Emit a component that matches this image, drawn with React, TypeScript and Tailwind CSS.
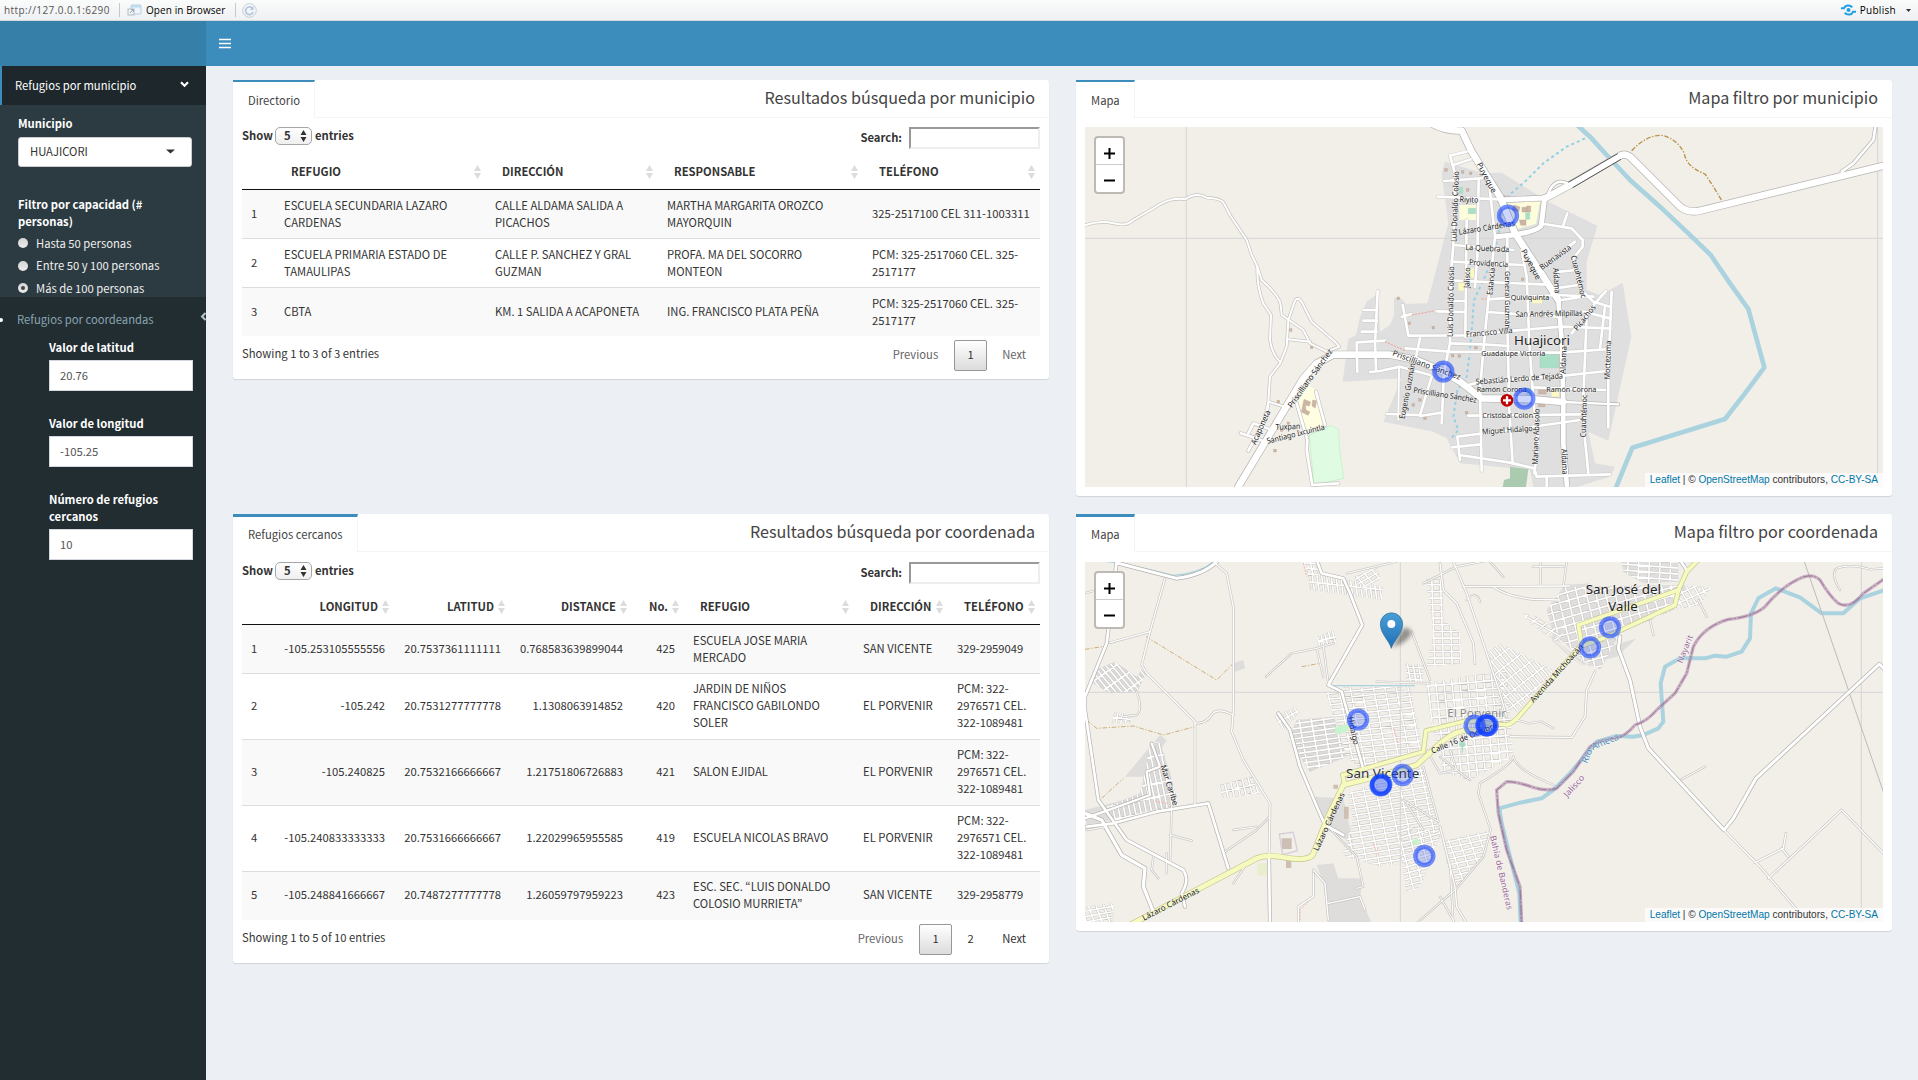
import React from "react";

/* ---------- map primitives ---------- */

type Road = [d: string, w: number];

function Roads({ layers }: { layers: { x?: number; y?: number; casing: string; fill: string; edge?: number; roads: Road[] }[] }) {
  return (
    <g fill="none" strokeLinecap="round" strokeLinejoin="round">
      {layers.map((l, i) => (
        <g key={"c" + i} transform={`translate(${l.x ?? 0} ${l.y ?? 0})`} stroke={l.casing}>
          {l.roads.map(([d, w], j) => (
            <path key={j} d={d} strokeWidth={w + (l.edge ?? 4)} />
          ))}
        </g>
      ))}
      {layers.map((l, i) => (
        <g key={"f" + i} transform={`translate(${l.x ?? 0} ${l.y ?? 0})`} stroke={l.fill}>
          {l.roads.map(([d, w], j) => (
            <path key={j} d={d} strokeWidth={w} />
          ))}
        </g>
      ))}
    </g>
  );
}

type GridSpec = { id: string; pts: string; a: number; sa: number; b: number; sb: number; bg?: string };

/* Street blocks: two families of parallel streets clipped to a district outline. */
function StreetGrid({ id, pts, a, sa, b, sb, bg }: GridSpec) {
  const p = pts.split(" ").map((s) => s.split(",").map(Number));
  const cx = p.reduce((s, v) => s + v[0], 0) / p.length;
  const cy = p.reduce((s, v) => s + v[1], 0) / p.length;
  const R = Math.max(...p.map((v) => Math.hypot(v[0] - cx, v[1] - cy)));
  const lines = (deg: number, step: number) => {
    const t = (deg * Math.PI) / 180;
    const ux = Math.cos(t);
    const uy = Math.sin(t);
    let d = "";
    for (let k = -Math.ceil(R / step); k * step <= R; k++) {
      const ox = cx - uy * k * step;
      const oy = cy + ux * k * step;
      d += `M${(ox - ux * R).toFixed(1)} ${(oy - uy * R).toFixed(1)}L${(ox + ux * R).toFixed(1)} ${(oy + uy * R).toFixed(1)}`;
    }
    return d;
  };
  const d = lines(a, sa) + lines(b, sb);
  return (
    <g>
      <clipPath id={id}>
        <polygon points={pts} />
      </clipPath>
      {bg && <polygon points={pts} fill={bg} />}
      <g clipPath={`url(#${id})`} fill="none">
        <path d={d} stroke="#c6c4c1" strokeWidth="8" />
        <path d={d} stroke="#fff" strokeWidth="4.8" />
      </g>
    </g>
  );
}

type LabelSpec = [text: string, x: number, y: number, rot: number, w: number, size?: number, color?: string];

function Labels({ items }: { items: LabelSpec[] }) {
  return (
    <g fontFamily="'Noto Sans', sans-serif" textAnchor="middle">
      {items.map(([t, x, y, r, w, s = 24, c = "#222"], i) => (
        <text
          key={i}
          transform={`translate(${x} ${y}) rotate(${r})`}
          dy="0.34em"
          fontSize={s}
          fill={c}
          stroke="#fff"
          strokeOpacity="0.5"
          strokeWidth="3"
          paintOrder="stroke"
          textLength={w}
          lengthAdjust="spacingAndGlyphs"
        >
          {t}
        </text>
      ))}
    </g>
  );
}

function Rings({ at }: { at: [number, number, number?][] }) {
  return (
    <g>
      {at.map(([x, y, o = 0.58], i) => (
        <circle key={i} cx={x} cy={y} r="27" fill="#03f" fillOpacity="0.2" stroke="#1040ff" strokeOpacity={o} strokeWidth="13" />
      ))}
    </g>
  );
}

/* ---------- Huajicori ---------- */

const townMain: Road[] = [
  ["M95 40Q130 62 185 62L215 125L240 165L300 260L345 370L430 500L475 570", 20],
  ["M475 570L485 690L490 880L490 1000L502 1140", 14],
  ["M-485 1130L-395 980L-335 880L-290 805L-250 760L-200 734L-30 734L50 750L130 785L180 815L245 865L400 868L490 876", 20],
  ["M490 876L655 883", 7],
  ["M435 265L510 225L655 140Q672 128 690 140L840 290Q865 310 900 302L1460 165", 20],
  ["M300 270L430 264L434 262L424 345Q418 362 345 374L288 380", 15],
  ["M445 250Q465 200 505 222", 8],
  ["M1325 185L1360 160L1420 90L1428 40", 8],
];

const townStreets: Road[] = [
  ["M200 125L150 137L165 190", 8],
  ["M160 165L212 148", 8],
  ["M132 213L240 205L262 200", 8],
  ["M113 260L300 268", 8],
  ["M165 190L160 405L152 500L150 700L132 785L125 940", 8],
  ["M200 330L196 680", 8],
  ["M236 210L232 440L225 530", 8],
  ["M265 200L285 380L262 600L250 720L240 840L245 1082", 8],
  ["M322 380L322 640L328 900L338 1060", 8],
  ["M365 420L380 500L388 700L400 870L415 1000L403 1090", 8],
  ["M160 405L340 420", 8],
  ["M155 455L370 465", 8],
  ["M165 512L440 524", 8],
  ["M155 573L195 573", 8],
  ["M110 604L195 606", 8],
  ["M262 568L470 555L580 560", 8],
  ["M262 606L475 620", 8],
  ["M25 677L195 676L340 662L485 650L630 655", 8],
  ["M150 700L250 703L325 708", 8],
  ["M17 715L150 725L480 728L615 718", 8],
  ["M240 815L380 805L500 796L620 783", 8],
  ["M205 825L245 815", 8],
  ["M400 832L615 840", 8],
  ["M205 917L540 913", 8],
  ["M155 1012L242 1003", 8],
  ["M180 1050L172 980L330 960L540 930", 8],
  ["M178 1035L330 1058L403 1075L410 1100L630 1093", 8],
  ["M440 1105L440 1140", 8],
  ["M432 342L515 355L548 390L548 410L520 445L525 485L545 540L580 575L630 590", 8],
  ["M490 345L502 310", 8],
  ["M430 470L525 395", 8],
  ["M480 485L530 480", 8],
  ["M465 535L535 525", 8],
  ["M485 570L550 560", 8],
  ["M475 480L465 540", 8],
  ["M515 670L585 580L618 543", 8],
  ["M550 605L630 625", 8],
  ["M635 545L625 780L625 952", 8],
  ["M615 590L600 715", 8],
  ["M560 620L550 860L555 990L565 1090", 8],
  ["M8 585L25 677", 8],
  ["M5 620L35 612", 8],
  ["M60 685L48 740", 8],
  ["M-67 543L-75 700L-72 780", 8],
  ["M-110 600L-70 600", 8],
  ["M-110 632L-70 632", 8],
  ["M-115 665L-70 665", 8],
  ["M-45 692L-130 697L-128 785", 8],
  ["M-90 786L-60 783L0 770L90 795", 8],
  ["M95 800L60 915L-40 912", 8],
  ["M125 908L60 918", 8],
  ["M-3 770L-5 930", 6],
];

const ruralWest: Road[] = [
  ["M40 467Q90 450 130 460T190 450L250 415Q300 380 345 388Q380 365 410 383Q455 385 462 400L480 435L530 510L545 555L562 590L575 630Q630 680 632 705L635 735L700 780L720 820L770 845L808 830L795 815L725 755L695 695Q680 675 672 700L655 750L650 830L630 880L600 920L595 995L650 1012", 6],
  ["M562 590Q560 650 580 700L603 735L600 810Q605 850 630 875", 6],
  ["M655 808L720 815", 6],
  ["M595 1000L585 1050L535 1142", 8],
  ["M512 1090L545 1100L585 1115", 8],
  ["M535 1090L550 1060L600 1078", 8],
  ["M680 1000L712 1110L710 1140L727 1245L805 1240", 8],
  ["M738 965L765 1065", 8],
];

const townLabels: LabelSpec[] = [
  ["Puyeque", 260, 203, 62, 100],
  ["Puyeque", 393, 463, 62, 100],
  ["Luis Donaldo Colosio", 165, 290, -88, 212],
  ["Luis Donaldo Colosio", 152, 575, -89, 212],
  ["Riyito", 207, 269, 2, 56],
  ["Lázaro Cárdenas", 260, 353, -9, 170],
  ["La Quebrada", 262, 415, 3, 132],
  ["Providencia", 266, 460, 3, 118],
  ["Buenavista", 466, 442, -36, 110],
  ["Cuauhtémoc", 536, 500, 76, 130],
  ["Aldama", 470, 512, 86, 76],
  ["Jalisco", 201, 503, -88, 62],
  ["Estancia", 273, 514, -84, 82],
  ["General Guzmán", 322, 570, 90, 174],
  ["Quiviquinta", 390, 562, 0, 116],
  ["San Andrés Milpillas", 447, 611, -1, 200],
  ["Picachos", 554, 623, -52, 90],
  ["Francisco Villa", 268, 667, -5, 140],
  ["Guadalupe Victoria", 340, 729, 0, 192],
  ["Aldama", 490, 750, -88, 84],
  ["Aldama", 494, 1055, 88, 76],
  ["Moctezuma", 623, 750, -88, 116],
  ["Sebastián Lerdo de Tejada", 358, 806, -4, 262],
  ["Ramón Corona", 305, 838, 0, 150],
  ["Ramón Corona", 514, 838, 0, 150],
  ["Priscilliano Sánchez", 135, 855, 9, 192],
  ["Cristóbal Colón", 323, 917, 0, 152],
  ["Miguel Hidalgo", 322, 960, -4, 152],
  ["Mariano Abasolo", 408, 980, -88, 168],
  ["Cuauhtémoc", 551, 918, -88, 128],
  ["Priscilliano Sánchez", 80, 765, 20, 215],
  ["Priscilliano Sánchez", -270, 805, -54, 210],
  ["Eugenio Guzmán", 22, 843, -79, 170],
  ["Acaponeta", -418, 952, -66, 110],
  ["Tuxpan", -336, 950, -2, 74],
  ["Santiago Ixcuintla", -313, 972, -14, 178],
  ["Huajicori", 426, 692, 0, 168, 39],
];

const townBuildings: [number, number][] = [
  [138, 180], [160, 172], [188, 186], [212, 190], [203, 240], [312, 260], [28, 640], [100, 653], [228, 713], [158, 737], [178, 738],
  [60, 870], [40, 885], [75, 925], [200, 908], [-5, 565], [-328, 660], [-265, 712], [-365, 875], [-375, 1022], [-335, 940], [-355, 960], [368, 508],
];

function TownMap() {
  return (
    <svg width="798" height="360" viewBox="0 0 798 360" className="block">
      <rect width="798" height="360" fill="#f2efe9" />
      <g transform="translate(315 -17) scale(0.333333)">
        <polygon
          fill="#dfdfdf"
          points="135,155 250,190 305,188 445,275 592,347 560,455 560,540 600,555 668,518 694,680 625,993 565,965 585,1060 645,1070 630,1100 530,1131 400,1131 390,1080 180,1060 140,985 100,965 -50,935 5,805 -172,815 -155,688 -132,675 -120,620 -100,575 -65,550 -60,665 -30,645 -18,615 -18,565 0,563 20,582 82,580 145,340 125,190"
        />
        <path d="M-641 50V1140M1433 50V1140M-950 385H1450" stroke="#d5d5d8" strokeWidth="3" />
        <polygon points="178,285 230,285 230,330 178,330" fill="#fdfcdb" />
        <polygon points="318,272 422,268 408,342 352,356 335,320" fill="#fdfcdb" />
        <polygon points="-310,880 -278,820 -255,840 -225,945 -282,965" fill="#fffee0" />
        <path d="M208 475h14v28h-14zM175 516h22v26h-22zM396 562h30v18h-30zM455 842h22v18h-22z" fill="#fbf8c0" />
        <path d="M205 295h22v16h-22zM178 232h10v18h-10zM377 308h12v20h-12zM420 732h56v41h-56zM380 835h22v18h-22z" fill="#a9dfc7" stroke="#8fcfb2" />
        <polygon points="-272,975 -208,946 -185,958 -180,1030 -169,1105 -258,1125" fill="#dffce2" stroke="#b8f2bd" strokeWidth="2" />
        <polygon points="330,1070 385,1078 378,1131 308,1131 312,1110 330,1105" fill="#aacbaf" />
        <path d="M520 35L570 80L620 135L690 210L780 290L865 370L932 435L990 520L1045 597L1093 772L1035 850L975 927L697 1013L645 1140" fill="none" stroke="#aad3df" strokeWidth="14" strokeLinejoin="round" />
        <g fill="none" stroke="#93d0e4" strokeWidth="6" strokeDasharray="9 9">
          <path d="M555 85L500 110L430 160L380 210L325 258L300 350L285 420L255 500L222 570L216 650L210 720L200 800L172 840L160 920L175 960L150 990" />
        </g>
        <g fill="#cbb5a5" stroke="#b9a291">
          {townBuildings.map(([x, y], i) => (
            <rect key={i} x={x - 4} y={y - 4} width="8" height="8" />
          ))}
          <path d="M342 285l18 6-4 14-20-6zM366 292h14v14h-14zM380 288h12v18h-12zM358 330l20 0 0 16-16 0z" />
          <path d="M-288 868l20 8-4 12-12-2 2 14 12 6-6 10-20-10zM-262 870l12 2-4 22-10-6zM415 838h24v14h-24zM415 878h20v12h-20z" />
        </g>
        <Roads
          layers={[
            { casing: "#c9c7c4", fill: "#fff", edge: 3, roads: townStreets },
            { x: -990, y: -120, casing: "#c4c2bf", fill: "#fff", edge: 4, roads: ruralWest },
            { casing: "#b4b3b1", fill: "#fff", edge: 4, roads: townMain },
          ]}
        />
        <path d="M505 217L653 131M518 233L663 148" stroke="#555" strokeWidth="3" />
        <path d="M695 122Q740 75 785 76Q830 85 853 130Q858 170 915 192Q935 220 966 273" fill="none" stroke="#b8924a" strokeWidth="4" strokeDasharray="14 5 4 5" />
        <path d="M35 615L100 603M-45 695L15 722M245 567h20" fill="none" stroke="#f59a8c" strokeWidth="3" strokeDasharray="6 4" />
        <Labels items={townLabels} />
        <circle cx="321" cy="871" r="19" fill="#bf0000" />
        <path d="M321 859v24M309 871h24" stroke="#fff" strokeWidth="7" />
        <Rings at={[[324, 317], [130, 785], [373, 866]]} />
      </g>
    </svg>
  );
}

/* ---------- San Vicente ---------- */

const valleyGrids: GridSpec[] = [
  { id: "sv1", pts: "768,548 830,530 1020,530 1058,720 870,775 830,740", a: -6, sa: 17, b: 79, sb: 34 },
  { id: "sv2", pts: "830,850 1060,770 1110,960 1000,1060 930,1070 815,1035 850,930", a: -9, sa: 17, b: 78, sb: 36 },
  { id: "sv3", pts: "680,630 790,620 830,740 720,785 655,690", a: -8, sa: 15, b: 80, sb: 36, bg: "#dcdbda" },
  { id: "sv4", pts: "612,620 675,590 690,610 640,660", a: 60, sa: 15, b: -30, sb: 60 },
  { id: "sv5", pts: "985,950 1115,965 1060,1110 1040,1140 1008,1145", a: -15, sa: 18, b: 75, sb: 30 },
  { id: "sv6", pts: "1125,990 1260,960 1245,1040 1160,1135 1130,1060", a: -12, sa: 17, b: 70, sb: 30 },
  { id: "ep1", pts: "1065,520 1310,480 1330,740 1200,810 1120,790 1085,640", a: -5, sa: 24, b: 84, sb: 24 },
  { id: "ep2", pts: "1068,205 1120,205 1120,330 1170,370 1175,460 1070,470 1090,370", a: 0, sa: 20, b: 88, sb: 26 },
  { id: "ep3", pts: "1250,430 1290,400 1450,480 1340,610 1290,580", a: 50, sa: 17, b: -38, sb: 36 },
  { id: "ep4", pts: "1005,460 1060,465 1060,520 1010,515", a: 4, sa: 18, b: 80, sb: 16 },
  { id: "nw1", pts: "715,190 840,210 940,230 935,270 720,240", a: 6, sa: 44, b: 82, sb: 14 },
  { id: "nw2", pts: "850,200 925,170 930,210 875,235", a: -30, sa: 16, b: 50, sb: 24 },
  { id: "nw3", pts: "740,380 790,360 800,400 745,410", a: -12, sa: 30, b: 75, sb: 12 },
  { id: "nw4", pts: "700,155 740,155 745,195 715,200", a: 4, sa: 16, b: 78, sb: 18 },
  { id: "sj1", pts: "1480,230 1850,225 1810,300 1650,370 1590,480 1540,450 1450,370 1430,300", a: -16, sa: 24, b: 76, sb: 28, bg: "#dfdedd" },
  { id: "sj2", pts: "1655,155 1825,155 1825,215 1720,220 1660,185", a: 4, sa: 18, b: 92, sb: 32, bg: "#dfdedd" },
  { id: "sj3", pts: "1840,225 1925,232 1890,285 1810,300", a: -24, sa: 24, b: 60, sb: 20 },
  { id: "sj4", pts: "1355,310 1400,320 1480,370 1470,400 1385,345", a: 30, sa: 18, b: -40, sb: 28 },
  { id: "mc1", pts: "240,700 270,695 300,790 325,885 245,905 130,935 110,890 210,850 225,785", a: -12, sa: 40, b: 78, sb: 16, bg: "#dcdbda" },
  { id: "mc2", pts: "75,480 135,455 200,500 215,480 230,490 200,545 120,550 70,520", a: 50, sa: 14, b: -35, sb: 40, bg: "#dcdbda" },
  { id: "mc3", pts: "445,825 545,800 570,850 460,865", a: -14, sa: 26, b: 76, sb: 18 },
  { id: "mc4", pts: "45,1190 130,1180 130,1240 45,1240", a: -10, sa: 16, b: 70, sb: 22 },
  { id: "mc5", pts: "130,605 185,615 180,640 125,640", a: 8, sa: 22, b: 100, sb: 14 },
];

const valleyMinor: Road[] = [
  ["M285 205L240 365L215 465L230 490L375 635L375 885", 4],
  ["M240 365L120 398", 4],
  ["M435 160L470 190L490 290L490 600L485 665L520 750L600 880L597 1050", 4],
  ["M375 640Q410 640 425 615T490 615", 4],
  ["M588 500L665 430L740 415L760 500", 3],
  ["M740 415L790 400M760 410L775 520", 3],
  ["M200 545Q220 600 200 615L160 620", 3],
  ["M305 890L300 1060M300 975L365 992", 3],
  ["M465 1025L560 960L600 920M490 960L560 950", 3],
  ["M920 515L1080 520", 3],
  ["M1025 365L1080 510", 3],
  ["M1110 160L1120 240L1160 280L1210 400L1215 460", 4],
  ["M1150 155L1190 250L1240 400L1290 550L1310 620", 4],
  ["M1180 230L1500 228M1270 230Q1310 260 1390 268L1470 270", 4],
  ["M1060 220L1160 170L1260 150", 3],
  ["M1190 270Q1220 240 1230 275", 3],
  ["M1412 155L1412 225M1390 170L1480 170M1490 155L1480 230", 3],
  ["M830 190L980 155M1300 200L1260 155", 3],
  ["M1330 740Q1330 760 1230 820L1225 850L1262 960L1240 1040L1160 1135L1040 1240", 3],
  ["M1110 950L1155 1130L1160 1190L1190 1240", 4],
  ["M1000 870L1105 935L1060 770M1010 880L1060 960", 3],
  ["M1070 720L1110 790M1110 740L1160 780L1110 790M1140 720L1160 780L1200 810", 3],
  ["M1575 485L1550 540L1545 620L1505 682L1320 680", 4],
  ["M1340 630L1375 640L1415 635L1450 655", 3],
  ["M1330 740Q1340 780 1450 825", 3],
  ["M1835 808L1905 770", 3],
  ["M1885 270L1910 320M1740 330L1750 375", 3],
  ["M2055 1058L2140 1015L2148 970M2095 1105L2315 900L2440 1030M2135 1015L2155 1040", 4],
  ["M1962 960L2070 1070L2190 1210", 4],
  ["M2310 240Q2280 190 2300 175Q2340 160 2400 178L2440 175", 3],
  ["M765 940L860 1040L880 1130L860 1135", 3],
  ["M250 1040L245 1080L265 1105M290 1030L290 1090M530 1060L490 1120", 3],
  ["M730 1080L765 1120L775 1230M775 1180L870 1160M870 1160L885 1200M730 1090L730 1160L685 1190L685 1240", 4],
  ["M1110 1160L1155 1240M1140 1060L1150 1240", 3],
  ["M45 250L80 240M50 960L110 950", 3],
];

const valleyMain: Road[] = [
  ["M140 155L110 400L45 560L45 600L85 870L170 990L340 1080Q360 1110 335 1150L345 1190", 8],
  ["M145 160L320 205Q400 195 440 155", 9],
  ["M45 925L130 895L240 855L230 785L270 770L245 700", 7],
  ["M50 950L130 940L260 905L415 880L475 1075", 8],
  ["M45 910L95 930L155 1035L225 1075L220 1130L248 1200", 10],
  ["M740 150L755 190L820 205L840 250L877 345L775 525L815 545L878 770", 8],
  ["M625 610L660 660L690 770L745 900L765 945L820 975", 8],
  ["M597 1045L600 1240", 8],
  ["M1650 380L1645 415L1680 510L1710 650L1735 715L1962 960L1990 925L2058 805L2428 462L2445 480", 9],
  ["M1830 150L1850 180", 8],
];

const valleyYellow: Road[] = [
  ["M180 1245L560 1045Q590 1032 640 1042Q710 1055 728 1035L770 930L820 825L920 800L1040 765L1100 710Q1140 670 1180 662L1250 660", 14],
  ["M825 825L818 795L1060 725L1068 662L1190 632L1310 645Q1330 640 1350 615L1530 410L1600 385L1815 285L1828 230", 11],
  ["M1535 400L1525 345L1825 240L1850 185L1885 150", 11],
];

const valleyLabels: LabelSpec[] = [
  ["San José del", 1660, 238, 0, 226, 39],
  ["Valle", 1659, 290, 0, 88, 39],
  ["San Vicente", 938, 790, 0, 220, 39, "#333"],
  ["El Porvenir", 1220, 611, 0, 176, 33, "#8a8a8a"],
  ["Avenida Michoacán", 1460, 490, -48, 225],
  ["Calle 16 de Octubre", 1182, 684, -22, 210],
  ["Lázaro Cárdenas", 777, 935, -65, 190],
  ["Lázaro Cárdenas", 302, 1182, -27, 188],
  ["Hidalgo", 850, 662, 78, 86],
  ["Mar Caribe", 298, 825, 72, 126],
  ["Nayarit", 1845, 417, -68, 88, 25, "#98689a"],
  ["Jalisco", 1512, 828, -48, 80, 25, "#98689a"],
  ["Río", 1550, 738, -68, 44, 28, "#4d8ab8"],
  ["Ameca", 1605, 695, -22, 86, 28, "#4d8ab8"],
  ["Bahía de Banderas", 1294, 1088, 77, 228, 25, "#98689a"],
];

function ValleyMap() {
  const border =
    "M2445 205L2380 250Q2340 300 2305 280Q2280 260 2250 210Q2225 185 2180 210Q2130 235 2085 290Q2050 320 1975 328Q1900 350 1870 410L1850 490L1815 550L1760 600Q1730 635 1695 645Q1665 680 1640 683Q1590 690 1560 710L1510 785L1460 835Q1430 845 1390 832Q1340 815 1310 815L1280 840L1285 910L1310 1020L1350 1130L1355 1240";
  return (
    <svg width="798" height="360" viewBox="0 0 798 360" className="block">
      <defs>
        <linearGradient id="pin" x1="0" y1="0" x2="0" y2="1">
          <stop offset="0" stopColor="#4a9fd6" />
          <stop offset="1" stopColor="#1f6fb5" />
        </linearGradient>
        <filter id="soft" x="-50%" y="-50%" width="200%" height="200%">
          <feGaussianBlur stdDeviation="6" />
        </filter>
      </defs>
      <rect width="798" height="360" fill="#f2efe9" />
      <g transform="translate(-15 -52) scale(0.333333)">
        <g fill="#dedddc">
          <polygon points="165,800 270,675 290,690 225,800" />
          <polygon points="740,1065 790,1060 805,1105 880,1105 870,1160 905,1240 775,1240 760,1120" />
          <polygon points="490,460 520,450 525,475 495,485" />
          <polygon points="45,900 240,850 250,905 50,945" />
          <polygon points="1480,225 1560,220 1450,390 1540,470 1500,440 1445,390" />
          <polygon points="1455,390 1560,470 1620,410 1700,385 1640,440 1540,465" />
          <polygon points="730,860 820,865 850,1000 770,960" />
        </g>
        {valleyGrids.map((g) => (
          <StreetGrid key={g.id} {...g} />
        ))}
        <path d="M991 155V1240M2374 155V1240M40 547H2445" stroke="#d5d5d8" strokeWidth="3" />
        <path d="M795 652l40-10v22l-40 8zM1028 990l16-4 4 16-18 4z" fill="#c6f4cb" />
        <path d="M562 1060h30v36h-30z" fill="#e9efce" />
        <path d="M635 985h30v32h-30zM648 1050h16v24h-16zM790 824h14v12h-14zM822 890h14v36h-14z" fill="#cdbfb4" />
        <path d="M628 972l42-5 12 55-44 12z" fill="none" stroke="#d8cddb" strokeWidth="4" />
        <path d="M110 155L160 160L310 196Q390 190 430 155M780 527H1035" fill="none" stroke="#aad3df" strokeWidth="4" />
        <path
          d="M2445 240L2370 265L2320 310L2255 310L2190 262L2118 235L2065 265L2043 310L2040 385L2015 425L1970 440L1935 437L1905 445L1830 445L1785 470L1772 520L1780 635L1765 655L1720 675L1690 680L1640 678L1580 695L1500 790L1450 840L1415 865L1350 878L1288 895L1295 940L1320 1040L1348 1150L1352 1240"
          fill="none"
          stroke="#aad3df"
          strokeWidth="12"
          strokeLinejoin="round"
        />
        <path d="M2203 155L2445 860" stroke="#bdbbb8" strokeWidth="3" />
        <g fill="none" stroke="#cfae7a" strokeWidth="3" strokeDasharray="14 5 4 5">
          <path d="M228 380L440 510L490 460M45 418L110 408M50 630L80 655L190 648L280 675L375 650M95 865L160 805M695 470L750 460" />
        </g>
        <path d="M970 655L985 700M700 160L710 200M910 1000L925 1040M690 1230L690 1200L715 1175M255 873L290 880" fill="none" stroke="#f7b0a6" strokeWidth="3" strokeDasharray="6 4" />
        <Roads
          layers={[
            { casing: "#c8c6c2", fill: "#fff", edge: 4, roads: valleyMinor },
            { casing: "#b4b2af", fill: "#fff", edge: 4, roads: valleyMain },
            { casing: "#c4c78c", fill: "#f6fabe", edge: 4, roads: valleyYellow },
          ]}
        />
        <path d={border} fill="none" stroke="#ac86a8" strokeOpacity="0.6" strokeWidth="10" strokeLinejoin="round" />
        <path d={border} fill="none" stroke="#93688f" strokeOpacity="0.8" strokeWidth="3" strokeDasharray="30 6 5 6" />
        <path d="M1177 728V705" stroke="#a3dcc4" strokeWidth="4" />
        <circle cx="1177" cy="703" r="8" fill="#a3dcc4" />
        <Labels items={valleyLabels} />
        <Rings at={[[864, 629], [1214, 647], [1249, 646, 0.75], [1253, 646, 0.6], [998, 795], [932, 826, 0.75], [934, 823, 0.55], [1063, 1038], [1620, 352], [1560, 412]]} />
        <path d="M966 412L1000 355Q1020 350 1025 370Q1010 400 966 412" fill="#000" fillOpacity="0.4" filter="url(#soft)" />
        <path d="M964 415C958 392 931 372 931 342A33.500 33.500 0 0 1 998 342C998 372 970 392 964 415Z" fill="url(#pin)" stroke="#2e6c97" strokeWidth="2" />
        <circle cx="964" cy="342" r="12" fill="#fff" />
      </g>
    </svg>
  );
}

/* ---------- page pieces ---------- */

function Box({ tab, title, thick, className, children }: { tab: string; title: string; thick?: boolean; className: string; children: React.ReactNode }) {
  return (
    <section className={`flex w-[816px] flex-col rounded-[3px] bg-white shadow-[0_1px_1px_rgba(0,0,0,0.12)] ${className}`}>
      <header className="flex h-[38px] shrink-0 justify-between">
        <div className={`flex h-[38px] items-center border-r border-r-[#f4f4f4] border-t-[#3c8dbc] pr-[14px] pl-[15px] text-[#444] ${thick ? "border-t-[3px]" : "border-t-2 pt-px"}`}>
          {tab}
        </div>
        <h3 className="flex h-[38px] flex-1 items-center justify-end border-b border-[#f4f4f4] pr-[14px] pb-[2px] text-[16.130px] text-[#444]">{title}</h3>
      </header>
      <div className="flex flex-1 flex-col px-[9px] pt-[9px]">{children}</div>
    </section>
  );
}

function MapFrame({ children }: { children: React.ReactNode }) {
  return (
    <div className="relative h-[360px] w-[798px] overflow-hidden font-['Liberation_Sans',sans-serif]">
      {children}
      <div className="absolute top-[9px] left-[9px] w-[31px] rounded-[4px] border-2 border-[#bdbab6] bg-white">
        <ZoomKey plus />
        <ZoomKey />
      </div>
      <div className="absolute right-0 bottom-0 flex h-[14px] items-center gap-[2.750px] bg-white/70 pr-[5px] pb-px pl-[5px] text-[10.100px] whitespace-nowrap text-[#333]">
        <span className="text-[#0078a8]">Leaflet</span>
        <span>|</span>
        <span>©</span>
        <span className="text-[#0078a8]">OpenStreetMap</span>
        <span>contributors,</span>
        <span className="text-[#0078a8]">CC-BY-SA</span>
      </div>
    </div>
  );
}

function ZoomKey({ plus }: { plus?: boolean }) {
  return (
    <div className={`flex h-[27px] items-center justify-center pt-[4px] ${plus ? "border-b border-[#ccc]" : ""}`}>
      <svg width="11" height="11" viewBox="0 0 11 11" stroke="#000" strokeWidth="2">
        <path d={plus ? "M0 5.500H11M5.500 0V11" : "M0 5.500H11"} />
      </svg>
    </div>
  );
}

function SortIcon() {
  return (
    <svg width="7" height="14" viewBox="0 0 7 14" fill="#dcdcdc" className="absolute top-[11px] right-[5px]">
      <path d="M3.500 0L7 6H0zM3.500 14L0 8H7z" />
    </svg>
  );
}

type Col = { h: string; w: string; right?: boolean };

function DataTable({ cols, rows }: { cols: Col[]; rows: { h: string; cells: string[] }[] }) {
  return (
    <div className="mt-[4px]">
      <div className="flex h-[36px] border-b border-[#111] font-bold text-[#333]">
        <div className="w-[33px]" />
        {cols.map((c) => (
          <div key={c.h} className={`relative flex items-center px-[16px] ${c.w} ${c.right ? "justify-end" : ""}`}>
            {c.h}
            <SortIcon />
          </div>
        ))}
      </div>
      {rows.map((r, i) => (
        <div key={i} className={`flex text-[#333] ${r.h} ${i % 2 ? "bg-white" : "bg-[#f9f9f9]"} ${i ? "border-t border-[#ddd]" : ""}`}>
          <div className="flex w-[33px] items-center pl-[9px]">{i + 1}</div>
          {cols.map((c, j) => (
            <div key={j} className={`flex items-center px-[9px] whitespace-pre ${c.w} ${c.right ? "justify-end" : ""}`}>
              {r.cells[j]}
            </div>
          ))}
        </div>
      ))}
    </div>
  );
}

function TableControls() {
  return (
    <div className="flex h-[23px] items-start justify-between font-bold text-[#333]">
      <div className="flex items-center">
        <span className="-mt-[2px]">Show</span>
        <span className="mr-[3px] ml-[2px] flex h-[18px] w-[37px] items-center justify-between rounded-[5px] border border-[#a6a6a6] bg-linear-to-b from-white to-[#efefef] pr-[4px] pl-[8px]">
          <span className="-mt-[2px]">5</span>
          <svg width="7" height="12" viewBox="0 0 7 12" fill="#333" className="-mt-px">
            <path d="M3.500 0L6.500 5H.5zM3.500 12L.5 7H6.500z" />
          </svg>
        </span>
        <span className="-mt-[2px]">entries</span>
      </div>
      <div className="flex items-center">
        <span className="-mt-px">Search:</span>
        <span className="ml-[7px] h-[22px] w-[131px] border-2 border-t-[#999] border-r-[#eee] border-b-[#eee] border-l-[#999] bg-white" />
      </div>
    </div>
  );
}

function TableFooter({ info, pages, last }: { info: string; pages: string[]; last?: boolean }) {
  return (
    <div className="flex h-[37px] items-center justify-between text-[#333]">
      <span className="-mt-[2px]">{info}</span>
      <div className="mt-[1px] flex items-center">
        <span className="mr-[16px] pb-[2px] text-[#666]">Previous</span>
        {pages.map((p, i) => (
          <span
            key={p}
            className={`flex h-[31px] items-center justify-center pb-[2px] ${i === 0 ? "w-[33px] rounded-[2px] border border-[#979797] bg-linear-to-b from-white to-[#dcdcdc]" : "ml-[2px] w-[33px]"}`}
          >
            {p}
          </span>
        ))}
        <span className={`mr-[14px] ml-[15px] pb-[2px] ${last ? "text-[#666]" : "text-[#333]"}`}>Next</span>
      </div>
    </div>
  );
}

const shelterCols: Col[] = [
  { h: "REFUGIO", w: "w-[211px]" },
  { h: "DIRECCIÓN", w: "w-[172px]" },
  { h: "RESPONSABLE", w: "w-[205px]" },
  { h: "TELÉFONO", w: "w-[177px]" },
];

const shelterRows = [
  { h: "h-[48px] pb-px", cells: ["ESCUELA SECUNDARIA LAZARO\nCARDENAS", "CALLE ALDAMA SALIDA A\nPICACHOS", "MARTHA MARGARITA OROZCO\nMAYORQUIN", "325-2517100 CEL 311-1003311"] },
  { h: "h-[49px] pb-px", cells: ["ESCUELA PRIMARIA ESTADO DE\nTAMAULIPAS", "CALLE P. SANCHEZ Y GRAL\nGUZMAN", "PROFA. MA DEL SOCORRO\nMONTEON", "PCM: 325-2517060 CEL. 325-\n2517177"] },
  { h: "h-[49px] pb-px", cells: ["CBTA", "KM. 1 SALIDA A ACAPONETA", "ING. FRANCISCO PLATA PEÑA", "PCM: 325-2517060 CEL. 325-\n2517177"] },
];

const nearCols: Col[] = [
  { h: "LONGITUD", w: "w-[119px]", right: true },
  { h: "LATITUD", w: "w-[116px]", right: true },
  { h: "DISTANCE", w: "w-[122px]", right: true },
  { h: "No.", w: "w-[52px]", right: true },
  { h: "REFUGIO", w: "w-[170px]" },
  { h: "DIRECCIÓN", w: "w-[94px]" },
  { h: "TELÉFONO", w: "w-[92px]" },
];

const pcm = "PCM: 322-\n2976571 CEL.\n322-1089481";

const nearRows = [
  { h: "h-[48px] pb-px", cells: ["-105.253105555556", "20.7537361111111", "0.768583639899044", "425", "ESCUELA JOSE MARIA\nMERCADO", "SAN VICENTE", "329-2959049"] },
  { h: "h-[66px] pb-[2px]", cells: ["-105.242", "20.7531277777778", "1.1308063914852", "420", "JARDIN DE NIÑOS\nFRANCISCO GABILONDO\nSOLER", "EL PORVENIR", pcm] },
  { h: "h-[66px] pb-[2px]", cells: ["-105.240825", "20.7532166666667", "1.21751806726883", "421", "SALON EJIDAL", "EL PORVENIR", pcm] },
  { h: "h-[66px] pb-[2px]", cells: ["-105.240833333333", "20.7531666666667", "1.22029965955585", "419", "ESCUELA NICOLAS BRAVO", "EL PORVENIR", pcm] },
  { h: "h-[49px] pb-[3px]", cells: ["-105.248841666667", "20.7487277777778", "1.26059797959223", "423", "ESC. SEC. “LUIS DONALDO\nCOLOSIO MURRIETA”", "SAN VICENTE", "329-2958779"] },
];

function Field({ label, value, className }: { label: string; value: string; className: string }) {
  return (
    <div className={`ml-[49px] w-[144px] text-white ${className}`}>
      <div className="font-bold whitespace-pre">{label}</div>
      <div className="mt-[4px] flex h-[31px] items-center border border-[#d2d6de] bg-white pl-[10px] text-[#555]">{value}</div>
    </div>
  );
}

function Sidebar() {
  return (
    <aside className="flex w-[206px] shrink-0 flex-col overflow-hidden bg-[#222d32] text-white">
      <div className="flex h-[39px] items-center border-l-2 border-[#3c8dbc] bg-[#1e282c] pl-[13px]">
        <span className="w-[165px]">Refugios por municipio</span>
        <svg width="9" height="7" viewBox="0 0 9 7" className="-mt-[3px]" fill="none" stroke="#fff" strokeWidth="2.200">
          <path d="M1 1.200L4.500 4.700L8 1.200" />
        </svg>
      </div>
      <div className="h-[192px] bg-[#2c3b41] px-[18px] pt-[10px]">
        <div className="font-bold">Municipio</div>
        <div className="mt-[5px] flex h-[30px] w-[174px] items-center justify-between rounded-[3px] border border-[#ccc] bg-white pr-[16px] pb-px pl-[11px] text-[#333]">
          HUAJICORI
          <svg width="9" height="5" viewBox="0 0 9 5" fill="#333">
            <path d="M0 .5H9L4.500 4.500z" />
          </svg>
        </div>
        <div className="mt-[29px] font-bold whitespace-pre">{"Filtro por capacidad (#\npersonas)"}</div>
        <div className="mt-[2px] flex flex-col">
          {["Hasta 50 personas", "Entre 50 y 100 personas", "Más de 100 personas"].map((t, i) => (
            <div key={t} className="flex h-[22.500px] items-center gap-[8px] text-[#eee]">
              <span className="flex size-[10px] items-center justify-center rounded-full bg-linear-to-b from-[#d4d4d4] to-[#ececec]">
                {i === 2 && <span className="size-[4px] rounded-full bg-[#444]" />}
              </span>
              {t}
            </div>
          ))}
        </div>
      </div>
      <div className="mt-[14px] flex h-[17px] items-center text-[#8aa4af]">
        <span className="-ml-[1px] size-[4px] rounded-full bg-white" />
        <span className="ml-[14px] w-[183px]">Refugios por coordeandas</span>
        <svg width="6" height="9" viewBox="0 0 6 9" className="-mt-[7px] shrink-0" fill="none" stroke="#b8c7ce" strokeWidth="2">
          <path d="M5.500 1L2 4.500L5.500 8" />
        </svg>
      </div>
      <Field label="Valor de latitud" value="20.76" className="mt-[11px]" />
      <Field label="Valor de longitud" value="-105.25" className="mt-[24px]" />
      <Field label={"Número de refugios\ncercanos"} value="10" className="mt-[24px]" />
    </aside>
  );
}

function ViewerBar() {
  return (
    <div className="flex h-[21px] shrink-0 items-center border-b border-[#d6dadc] bg-linear-to-b from-[#fafbfb] to-[#eff1f2] font-['Open_Sans',sans-serif] text-[10px] text-black">
      <span className="w-[119px] pl-[4px] tracking-[0.420px] text-[#555]">http://127.0.0.1:6290</span>
      <span className="h-[14px] w-px bg-[#c4c8ca]" />
      <svg width="15" height="12" viewBox="0 0 15 12" className="ml-[7px]" fill="none">
        <rect x="4" y="1" width="10" height="9" rx="1" fill="#eef6fb" stroke="#b7cfdf" />
        <path d="M4 2.500H14" stroke="#b7d9ee" strokeWidth="2" />
        <rect x="1" y="5" width="6" height="6" fill="#eef2f5" stroke="#b4bfc8" />
        <path d="M3 9L6 6M4 5.500H6.500V8" stroke="#9aa8b3" />
      </svg>
      <span className="ml-[4px] w-[89px] font-medium tracking-[0.080px]">Open in Browser</span>
      <span className="h-[14px] w-px bg-[#c4c8ca]" />
      <svg width="15" height="15" viewBox="0 0 15 15" className="ml-[6px]" fill="none" stroke="#b4c6e0">
        <circle cx="7.500" cy="7.500" r="6.800" stroke="#c3ced8" />
        <path d="M10.500 5.500A3.800 3.800 0 1 0 11 9" strokeWidth="1.800" />
        <path d="M11.500 3V7H8z" fill="#b4c6e0" stroke="none" />
      </svg>
      <div className="ml-auto flex items-center pr-[7px]">
        <svg width="15" height="12" viewBox="0 0 15 12" fill="none" stroke="#1f9fe8" strokeWidth="2">
          <path d="M0 4.200H3C4.200 1.200 8.500 .2 11.300 3.200M15 7.800H12C10.800 10.800 6.500 11.800 3.700 8.800" />
          <circle cx="7.500" cy="6" r="2" fill="#1f9fe8" stroke="none" />
        </svg>
        <span className="ml-[4px] font-medium tracking-[0.300px]">Publish</span>
        <svg width="5" height="3" viewBox="0 0 5 3" className="ml-[10px]">
          <path d="M0 0H5L2.500 3z" fill="#333" />
        </svg>
      </div>
    </div>
  );
}

export default function App() {
  return (
    <div className="flex h-[1080px] w-[1918px] flex-col overflow-hidden bg-[#ecf0f5] font-['Noto_Sans_CJK_KR',sans-serif] text-[11.250px] leading-[17px]">
      <ViewerBar />
      <div className="flex h-[45px] shrink-0 bg-[#3c8dbc]">
        <div className="w-[206px] bg-[#367fa9]" />
        <svg width="12" height="11" viewBox="0 0 12 11" className="mt-[17px] ml-[13px]" stroke="#fff" strokeWidth="1.600">
          <path d="M0 1.500H12M0 5.500H12M0 9.500H12" />
        </svg>
      </div>
      <div className="flex flex-1">
        <Sidebar />
        <main className="flex gap-[27px] pt-[14px] pl-[27px]">
          <div className="flex flex-col">
            <Box tab="Directorio" title="Resultados búsqueda por municipio" className="h-[299px]">
              <TableControls />
              <DataTable cols={shelterCols} rows={shelterRows} />
              <TableFooter info="Showing 1 to 3 of 3 entries" pages={["1"]} last />
            </Box>
            <Box tab="Refugios cercanos" title="Resultados búsqueda por coordenada" thick className="mt-[135px] h-[449px]">
              <div className="h-px" />
              <TableControls />
              <DataTable cols={nearCols} rows={nearRows} />
              <TableFooter info="Showing 1 to 5 of 10 entries" pages={["1", "2"]} />
            </Box>
          </div>
          <div className="flex flex-col">
            <Box tab="Mapa" title="Mapa filtro por municipio" className="h-[416px]">
              <MapFrame>
                <TownMap />
              </MapFrame>
            </Box>
            <Box tab="Mapa" title="Mapa filtro por coordenada" thick className="mt-[18px] h-[417px]">
              <div className="h-px" />
              <MapFrame>
                <ValleyMap />
              </MapFrame>
            </Box>
          </div>
        </main>
      </div>
    </div>
  );
}
